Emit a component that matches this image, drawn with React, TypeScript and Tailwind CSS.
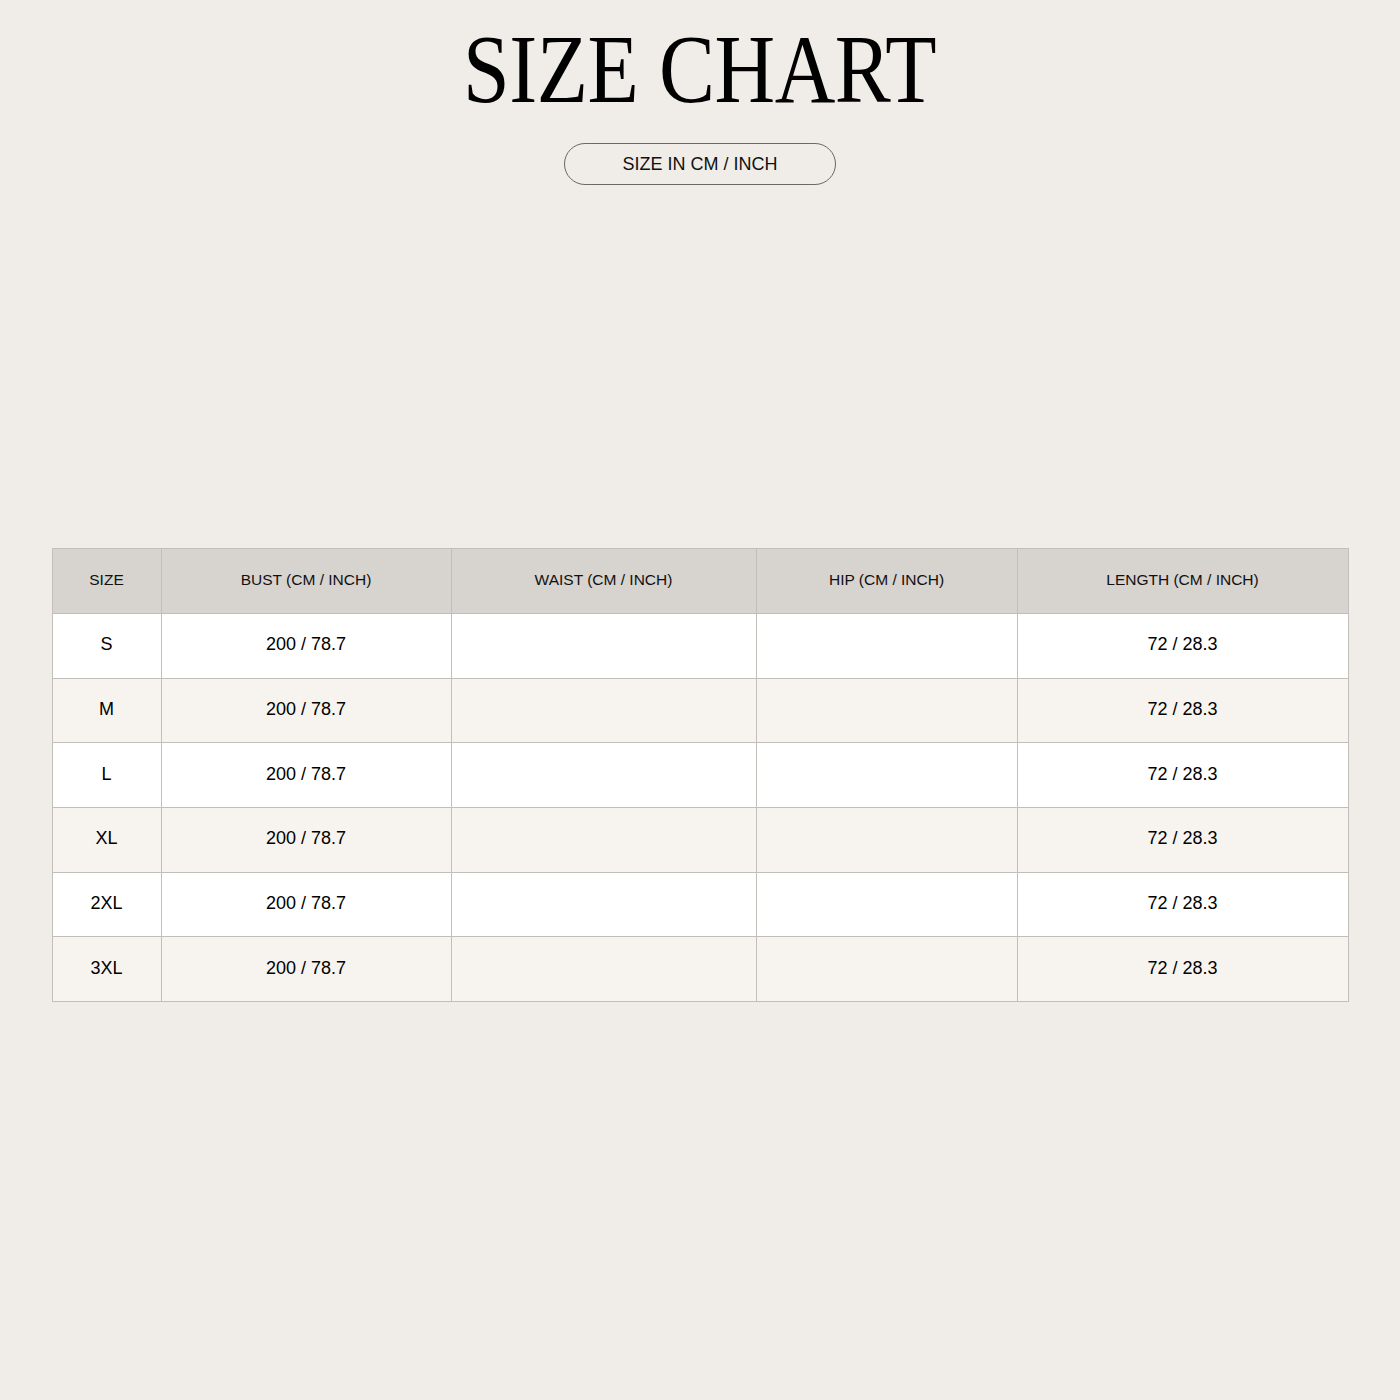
import React from "react";

const rows = ["S", "M", "L", "XL", "2XL", "3XL"];
const headers = ["SIZE", "BUST (CM / INCH)", "WAIST (CM / INCH)", "HIP (CM / INCH)", "LENGTH (CM / INCH)"];
const widths = ["w-[109px]", "w-[290px]", "w-[305px]", "w-[261px]", "w-[331px]"];

export default function App() {
  return (
    <div className="w-[1400px] h-[1400px] bg-[#f0ede8] flex flex-col items-center text-black" style={{ fontFamily: '"Liberation Sans", Arial, sans-serif' }}>
      <h1
        className="mt-[21px] text-[97px] leading-[97px] tracking-[-0.005em] scale-x-[0.865] font-normal whitespace-nowrap"
        style={{ fontFamily: '"Liberation Serif", "Times New Roman", serif' }}
      >
        SIZE CHART
      </h1>
      <div className="mt-[25px] w-[272px] h-[42px] rounded-full border border-[#6b6865] flex items-center justify-center text-[18px] text-[#111]">
        SIZE IN CM / INCH
      </div>
      <table className="mt-[363px] w-[1296px] border-collapse table-fixed border border-[#c2beb9]">
        <colgroup>
          {widths.map((w, i) => (
            <col key={i} className={w} />
          ))}
        </colgroup>
        <thead>
          <tr className="bg-[#d7d3cf] h-[65px]">
            {headers.map((h) => (
              <th key={h} className="border border-[#c2beb9] font-normal text-[15.5px] text-[#111] text-center pb-[3px]">
                {h}
              </th>
            ))}
          </tr>
        </thead>
        <tbody>
          {rows.map((r, i) => (
            <tr key={r} className={`h-[64.7px] ${i % 2 === 0 ? "bg-white" : "bg-[#f7f4f0]"}`}>
              <td className="border border-[#c2beb9] text-center text-[18px] pb-[2px]">{r}</td>
              <td className="border border-[#c2beb9] text-center text-[18px] pb-[2px]">200 / 78.7</td>
              <td className="border border-[#c2beb9]"></td>
              <td className="border border-[#c2beb9]"></td>
              <td className="border border-[#c2beb9] text-center text-[18px] pb-[2px]">72 / 28.3</td>
            </tr>
          ))}
        </tbody>
      </table>
    </div>
  );
}
